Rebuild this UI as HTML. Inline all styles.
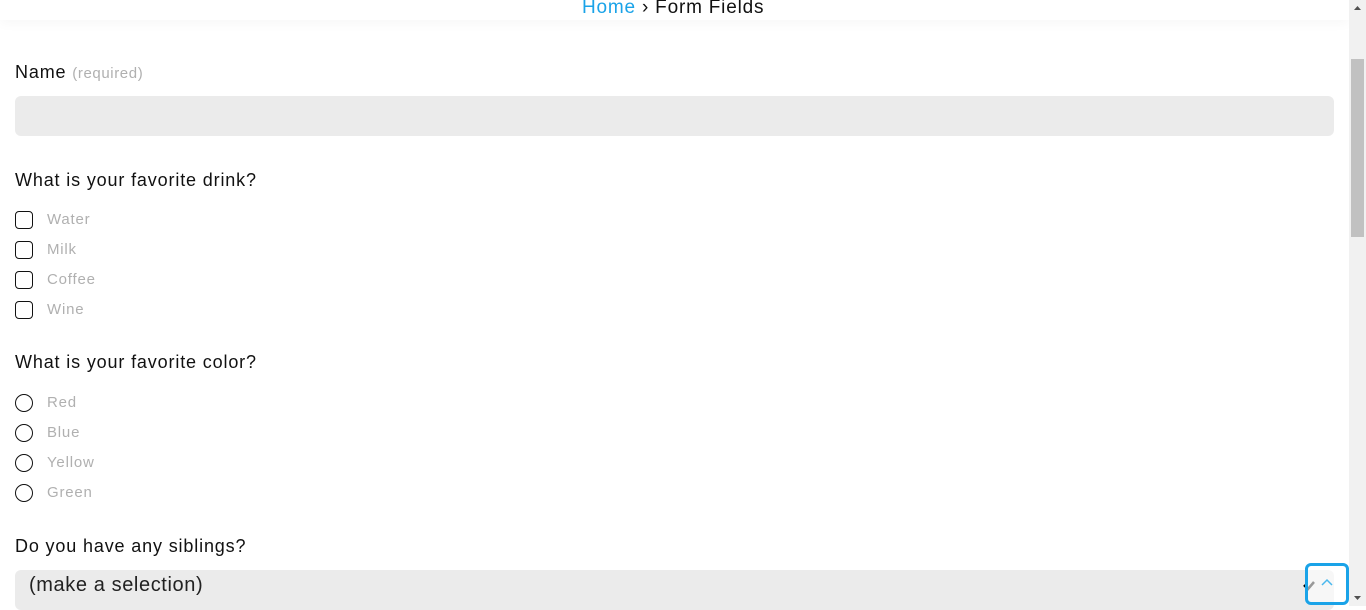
<!DOCTYPE html>
<html><head><meta charset="utf-8"><style>
*{margin:0;padding:0;box-sizing:border-box}
body{width:1366px;height:606px;overflow:hidden;background:#fff;font-family:"Liberation Sans",sans-serif;position:relative;color:#111}
.a{position:absolute;white-space:nowrap}
.hdr{position:absolute;left:0;top:0;width:1349px;height:20px;background:#fff;box-shadow:0 3px 12px rgba(0,0,0,0.035)}
.q{font-size:18px;left:15px;letter-spacing:0.85px}
.opt{font-size:15px;color:#b0b0b0;left:47px;letter-spacing:0.8px}
.cb{position:absolute;left:15px;width:18px;height:18px;border:1.5px solid #111;border-radius:4px}
.rd{position:absolute;left:15px;width:18px;height:18px;border:1.5px solid #111;border-radius:50%}
</style></head><body>
<div class="hdr"></div>
<div class="a" style="left:582px;top:-3px;font-size:19px;letter-spacing:0.8px"><span style="color:#1aa3e8">Home</span> › Form Fields</div>
<div class="a q" style="top:62px">Name <span style="font-size:15px;color:#b0b0b0;letter-spacing:0.6px">(required)</span></div>
<div class="a" style="left:15px;top:96px;width:1319px;height:40px;background:#ebebeb;border-radius:6px"></div>
<div class="a q" style="top:170px">What is your favorite drink?</div>
<div class="cb" style="top:211px"></div><div class="a opt" style="top:211px">Water</div>
<div class="cb" style="top:241px"></div><div class="a opt" style="top:241px">Milk</div>
<div class="cb" style="top:271px"></div><div class="a opt" style="top:271px">Coffee</div>
<div class="cb" style="top:301px"></div><div class="a opt" style="top:301px">Wine</div>
<div class="a q" style="top:352px">What is your favorite color?</div>
<div class="rd" style="top:394px"></div><div class="a opt" style="top:394px">Red</div>
<div class="rd" style="top:424px"></div><div class="a opt" style="top:424px">Blue</div>
<div class="rd" style="top:454px"></div><div class="a opt" style="top:454px">Yellow</div>
<div class="rd" style="top:484px"></div><div class="a opt" style="top:484px">Green</div>
<div class="a q" style="top:536px">Do you have any siblings?</div>
<div class="a" style="left:15px;top:570px;width:1319px;height:40px;background:#ebebeb;border-radius:6px"></div>
<div class="a" style="left:29px;top:574px;font-size:20px;color:#222;letter-spacing:0.6px">(make a selection)</div>
<svg class="a" style="left:1302px;top:580px" width="14" height="12"><path d="M2 5 L6 9 L12 2" stroke="#000" stroke-width="2.5" fill="none"/></svg>
<div class="a" style="left:1305px;top:563px;width:44px;height:42px;border:3px solid #1aa3e8;border-radius:6px;background:rgba(255,255,255,0.6)"></div>
<svg class="a" style="left:1320px;top:578px" width="14" height="10"><path d="M2 7 L7 2 L12 7" stroke="#4ab8ee" stroke-width="1.5" fill="none"/></svg>
<div class="a" style="left:1349px;top:0;width:17px;height:606px;background:#f1f1f1"></div>
<div class="a" style="left:1351px;top:59px;width:13px;height:178px;background:#c1c1c1"></div>
<svg class="a" style="left:1351px;top:4px" width="13" height="8"><path d="M3 6 L6.5 2 L10 6Z" fill="#505050"/></svg>
<svg class="a" style="left:1351px;top:594px" width="13" height="8"><path d="M3 2 L6.5 6 L10 2Z" fill="#505050"/></svg>
</body></html>
